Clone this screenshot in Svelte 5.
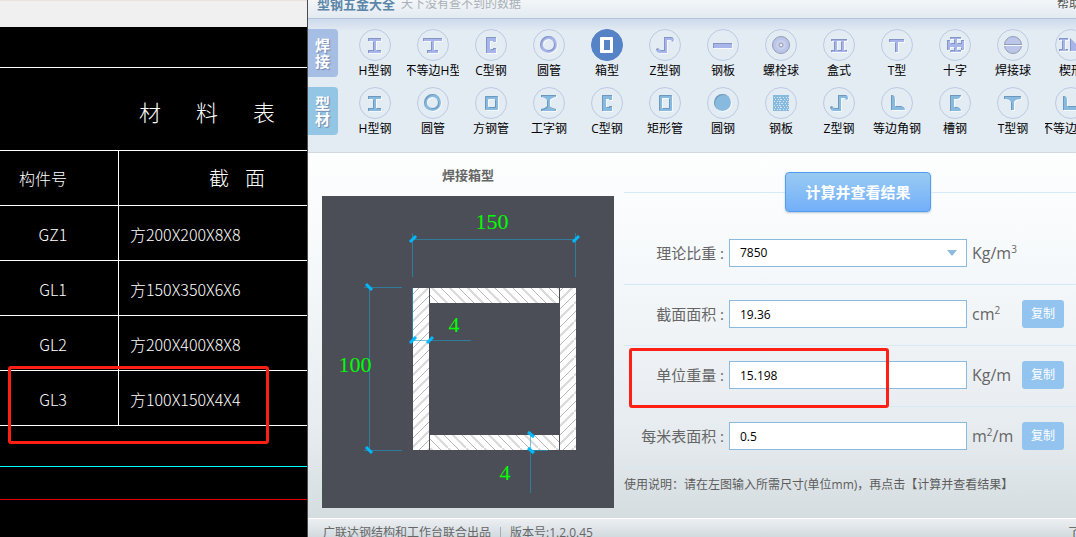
<script lang="ts">
  const members = [
    { id: 'GZ1', section: '方200X200X8X8' },
    { id: 'GL1', section: '方150X350X6X6' },
    { id: 'GL2', section: '方200X400X8X8' },
    { id: 'GL3', section: '方100X150X4X4', marked: true },
  ]

  const beam = 'M9 9H22V12H17V21H22V24H9V21H14V12H9Z'
  const ring = 'M7 15.5A8.500 8.500 0 1 1 24 15.500A8.500 8.500 0 1 1 7 15.500ZM10 15.500A5.500 5.500 0 1 0 21 15.500A5.500 5.500 0 1 0 10 15.500Z'
  const lipped = 'M11 8H21V13H18V12H15V20H18V19H21V24H11Z'
  const box = 'M10 8H21Q22 8 22 9V23Q22 24 21 24H10Q9 24 9 23V9Q9 8 10 8ZM13 11V21H19V11Z'
  const zed = 'M15 8H22Q25 8 25 12L23 13Q23 11 21 11H18V24H11Q8 24 7 20L9 19Q10 21 12 21H15Z'

  const welded = [
    { label: 'H型钢', d: beam },
    { label: '不等边H型', d: 'M6 9H25V12H17V21H21V24H10V21H14V12H6Z' },
    { label: 'C型钢', d: lipped },
    { label: '圆管', d: ring },
    { label: '箱型', d: box },
    { label: 'Z型钢', d: zed },
    { label: '钢板', d: 'M6 14H25V19H6Z' },
    { label: '螺栓球', kind: 'bolt' },
    { label: '盒式', d: 'M8 10H24V12H21V21H24V23H8V21H11V12H8ZM14 12V21H18V12Z' },
    { label: 'T型', d: 'M8 10H23V13H17V23H14V13H8Z' },
    { label: '十字', d: 'M11 8H22V10H18V14H22V11H25V21H22V18H18V21H22V23H11V21H15V18H11V21H8V11H11V14H15V10H11Z' },
    { label: '焊接球', kind: 'ball' },
    { label: '楔形', d: 'M4 9H13V11H10V20H13V22H4V20H7V11H4ZM15 9L28 22H15Z' },
  ]

  const profiles = [
    { label: 'H型钢', d: beam },
    { label: '圆管', d: ring },
    { label: '方钢管', d: 'M11 9H22Q23 9 23 10V22Q23 23 22 23H11Q10 23 10 22V10Q10 9 11 9ZM14 12Q13 12 13 13V19Q13 20 14 20H19Q20 20 20 19V13Q20 12 19 12Z' },
    { label: '工字钢', d: 'M8 8H23V10Q18 11 17 13V19Q18 21 23 22V24H8V22Q13 21 14 19V13Q13 11 8 10Z' },
    { label: 'C型钢', d: lipped },
    { label: '矩形管', d: 'M11 8H22Q23 8 23 9V23Q23 24 22 24H11Q10 24 10 23V9Q10 8 11 8ZM13 11V21H20V11Z' },
    { label: '圆钢', d: 'M7 15.500A8.500 8.500 0 1 1 24 15.500A8.500 8.500 0 1 1 7 15.500Z' },
    { label: '钢板', kind: 'plate' },
    { label: 'Z型钢', d: zed },
    { label: '等边角钢', d: 'M10 8Q14 8 14 12V19H20Q24 20 24 23H10Z' },
    { label: '槽钢', d: 'M11 8H22Q22 11 18 12H15V20H18Q22 21 22 24H11Z' },
    { label: 'T型钢', d: 'M7 9H24V12Q18 12 17 15V23H14V15Q13 12 7 12Z' },
    { label: '不等边角钢', d: 'M8 9Q12 9 12 13V19H24Q28 20 28 23H8Z' },
  ]

  const groups = [
    { name: '焊接', cls: 'welded', items: welded },
    { name: '型材', cls: 'profiles', items: profiles },
  ]

  let current = welded[4]
  let density = '7850'
  let width = 150
  let height = 100
  let t1 = 4
  let t2 = 4
  let area = ''
  let weight = ''
  let surface = ''

  function calculate() {
    const cm2 = (width * height - (width - 2 * t1) * (height - 2 * t2)) / 100
    area = String(cm2)
    weight = ((cm2 * Number(density)) / 10000).toFixed(3)
    surface = String((2 * (width + height)) / 1000)
  }

  function copy(value: string) {
    navigator.clipboard.writeText(value)
  }

  calculate()
</script>

<div class="desktop">
  <section class="cad">
    <div class="cad-bar"></div>
    <table>
      <colgroup>
        <col class="id-col" />
        <col />
      </colgroup>
      <thead>
        <tr class="blank"><td colspan="2"></td></tr>
        <tr class="title">
          <th colspan="2"><div><span>材</span><span>料</span><span>表</span></div></th>
        </tr>
        <tr class="head">
          <th>构件号</th>
          <th><div><span>截</span><span>面</span></div></th>
        </tr>
      </thead>
      <tbody>
        {#each members as m}
          <tr>
            <td class="id">{m.id}</td>
            <td class="section">
              {m.section}
              {#if m.marked}<i class="mark"></i>{/if}
            </td>
          </tr>
        {/each}
      </tbody>
    </table>
    <div class="cyan-line"></div>
    <div class="red-line"></div>
  </section>

  <main class="app">
    <header>
      <strong>型钢五金大全</strong>
      <span>天下没有查不到的数据</span>
      <a href="#help">帮助</a>
    </header>

    <nav>
      {#each groups as group}
        <div class="group {group.cls}">
          <div class="tab">{group.name}</div>
          {#each group.items as item}
            <button class="shape" class:active={current === item} on:click={() => (current = item)}>
              <svg viewBox="0 0 32 32" width="32" height="32" aria-hidden="true">
                <circle class="rim" cx="16" cy="16" r="15.5" />
                {#if item.kind === 'bolt'}
                  <circle class="ball" cx="16" cy="16" r="8.5" />
                  <circle class="shine" cx="16" cy="16" r="5" />
                  <circle class="hole" cx="16" cy="16" r="2" />
                {:else if item.kind === 'ball'}
                  <circle class="ball" cx="16" cy="16" r="8.5" />
                  <path class="seam" d="M8 15.5H24" />
                  <path class="cut" d="M7 16.5H25" />
                {:else if item.kind === 'plate'}
                  <rect class="glyph" x="8" y="8" width="16" height="16" />
                  <path
                    class="specks"
                    d="M9 10.5H24M10 12.5H24M9 14.5H24M11 16.5H24M9 18.5H24M10 20.5H24M9 22.5H24" />
                {:else}
                  <path class="glyph" filter="url(#bevel)" fill-rule="evenodd" d={item.d} />
                {/if}
              </svg>
              <span>{item.label}</span>
            </button>
          {/each}
        </div>
      {/each}
    </nav>

    <div class="work">
      <figure>
        <figcaption>焊接箱型</figcaption>
        <svg class="drawing" viewBox="0 0 292 312">
          <defs>
            <!-- pressed-in look for the toolbar glyphs -->
            <filter id="bevel" x="-20%" y="-30%" width="140%" height="160%" color-interpolation-filters="sRGB">
              <feOffset in="SourceAlpha" dx="1" dy="1" result="moved" />
              <feFlood flood-color="#2f4a6b" flood-opacity="0.3" />
              <feComposite in2="SourceAlpha" operator="in" />
              <feComposite in2="moved" operator="out" result="edge" />
              <feFlood flood-color="#f6f9fc" />
              <feComposite in2="moved" operator="in" result="light" />
              <feMerge>
                <feMergeNode in="light" />
                <feMergeNode in="SourceGraphic" />
                <feMergeNode in="edge" />
              </feMerge>
            </filter>
            <pattern id="rise" width="18" height="18" patternUnits="userSpaceOnUse">
              <rect width="18" height="18" fill="#fff" />
              <path d="M-1 10L10 -1M8 19L19 8" stroke="#b4b4b8" />
              <path d="M-1 19L19 -1" stroke="#d8d8d8" stroke-width="2" />
            </pattern>
            <pattern id="fall" width="18" height="18" patternUnits="userSpaceOnUse">
              <rect width="18" height="18" fill="#fff" />
              <path d="M-1 8L10 19M8 -1L19 10" stroke="#b4b4b8" />
              <path d="M-1 -1L19 19" stroke="#d8d8d8" stroke-width="2" />
            </pattern>
          </defs>
          <rect x="91" y="92" width="16" height="162" fill="url(#rise)" />
          <rect x="238" y="92" width="16" height="162" fill="url(#rise)" />
          <rect x="108" y="92" width="129" height="15" fill="url(#fall)" />
          <rect x="108" y="239" width="129" height="15" fill="url(#fall)" />
          <g class="dim">
            <path d="M90.5 37V81M253.5 37V81M90 43.5H254" />
            <path d="M42 91.5H80M42 254.5H80M47.5 91V254" />
            <path d="M90 144.5H149M90.5 92V144" />
            <path d="M208.5 238V297M208 254.5H226" />
          </g>
          <g class="tick">
            <path d="M88 46L94 40M251 46L257 40" />
            <path d="M88 147L94 141M105 147L111 141" />
            <path d="M44 88L50 94M44 251L50 257" />
            <path d="M206 236L212 241M206 252L212 257" />
          </g>
          <text x="170" y="33">{width}</text>
          <text x="33" y="176">{height}</text>
          <text x="132" y="136">{t1}</text>
          <text x="183" y="284">{t2}</text>
        </svg>
      </figure>

      <form on:submit|preventDefault={calculate}>
        <div class="submit"><button type="submit">计算并查看结果</button></div>
        <div class="row">
          <label for="density">理论比重 :</label>
          <div class="select">
            <select id="density" bind:value={density}>
              <option>7850</option>
              <option>7930</option>
            </select>
            <svg viewBox="0 0 10 6" width="10" height="6"><path d="M0 0H10L5 6Z" /></svg>
          </div>
          <span class="unit">Kg/m<sup>3</sup></span>
        </div>
        <div class="row">
          <label for="area">截面面积 :</label>
          <input id="area" bind:value={area} />
          <span class="unit">cm<sup>2</sup></span>
          <button type="button" on:click={() => copy(area)}>复制</button>
        </div>
        <div class="row">
          <label for="weight">单位重量 :</label>
          <input id="weight" bind:value={weight} />
          <span class="unit">Kg/m</span>
          <button type="button" on:click={() => copy(weight)}>复制</button>
          <i class="mark"></i>
        </div>
        <div class="row">
          <label for="surface">每米表面积 :</label>
          <input id="surface" bind:value={surface} />
          <span class="unit">m<sup>2</sup>/m</span>
          <button type="button" on:click={() => copy(surface)}>复制</button>
        </div>
        <p>使用说明：请在左图输入所需尺寸(单位mm)，再点击【计算并查看结果】</p>
      </form>
    </div>

    <footer>
      <span>广联达钢结构和工作台联合出品</span>
      <span class="version">版本号:1.2.0.45</span>
      <a href="#about">了解</a>
    </footer>
  </main>
</div>

<style>
  :global(body) {
    margin: 0;
  }

  .desktop {
    display: grid;
    grid-template-columns: 308px 1fr;
    height: 100vh;
    overflow: hidden;
    font: 12px/16px 'Open Sans', 'Noto Sans CJK SC', sans-serif;
  }

  button,
  input,
  select {
    box-sizing: border-box;
    margin: 0;
    padding: 0;
    font: inherit;
  }

  /* drawing sheet */
  .cad {
    background: #000;
    border-right: 1px solid #4a4a4a;
    color: #fff;
    font-family: 'Noto Sans CJK SC', sans-serif;
    font-weight: 300;
  }

  .cad-bar {
    box-sizing: border-box;
    height: 27px;
    background: #f0f0f0;
    border-top: 1px solid #ebe2de;
  }

  table {
    width: 100%;
    border-spacing: 0;
    table-layout: fixed;
  }

  .id-col {
    width: 119px;
  }

  th,
  td {
    box-sizing: border-box;
    height: 55px;
    padding: 0;
    border-bottom: 1px solid #fff;
    font-weight: 300;
  }

  .blank td {
    height: 41px;
  }

  .title th {
    height: 83px;
    font-size: 22px;
    line-height: 28px;
  }

  .title div {
    display: flex;
    justify-content: flex-end;
    gap: 35px;
    padding: 4px 32px 0 0;
  }

  .head th {
    font-size: 20px;
    line-height: 28px;
  }

  .head th:first-child {
    padding-right: 32px;
    font-size: 16px;
  }

  .head div {
    display: flex;
    justify-content: flex-end;
    gap: 16px;
    padding-right: 42px;
  }

  .id,
  .head th:first-child {
    border-right: 1px solid #fff;
  }

  tbody td {
    font-size: 16px;
    line-height: 20px;
  }

  .id {
    padding: 2px 12px 0 0;
    text-align: center;
  }

  .section {
    padding: 2px 0 0 11px;
  }

  tbody tr,
  .row {
    position: relative;
  }

  .mark {
    position: absolute;
    box-sizing: border-box;
    border: 3px solid #ff2015;
    border-radius: 3px;
    pointer-events: none;
  }

  tr .mark {
    inset: -5px 38px -18px 8px;
  }

  .cyan-line {
    height: 40px;
    border-bottom: 1px solid #0ff;
  }

  .red-line {
    height: 32px;
    border-bottom: 1px solid #e60000;
  }

  /* calculator window */
  .app {
    display: flex;
    flex-direction: column;
    min-width: 0;
    overflow: hidden;
  }

  header {
    display: flex;
    flex: none;
    align-items: center;
    box-sizing: border-box;
    height: 19px;
    padding: 0 0 10px 9px;
    overflow: hidden;
    background: linear-gradient(#f3f6f9, #e2eaf1);
    border-bottom: 1px solid #b6c5dc;
    white-space: nowrap;
  }

  header strong {
    color: #5b86a8;
    font-size: 13px;
  }

  header span {
    margin-left: 6px;
    color: #a9afb5;
  }

  header a {
    margin: 0 -5px 0 auto;
    color: #555;
    text-decoration: none;
  }

  nav {
    display: flex;
    flex: none;
    flex-direction: column;
    gap: 8px;
    padding: 10px 0 15px;
    overflow: hidden;
    background: linear-gradient(#ccdaed, #e3ebf3 12px);
    border-bottom: 1px solid #d4d9e0;
  }

  .group {
    display: flex;
    align-items: flex-start;
    height: 50px;
  }

  .tab {
    flex: none;
    box-sizing: border-box;
    width: 30px;
    height: 48px;
    margin-right: 8px;
    padding: 8px 7px;
    border-radius: 0 4px 4px 0;
    background: #a6bde4;
    color: #fff;
    font-size: 15px;
    font-weight: 700;
    line-height: 16px;
    text-shadow: 1px 1px 1px #6f86ae;
  }

  .profiles .tab {
    background: #93c6e4;
  }

  .shape {
    display: flex;
    flex: none;
    flex-direction: column;
    align-items: center;
    gap: 2px;
    width: 58px;
    border: 0;
    background: none;
    color: #000;
    cursor: pointer;
  }

  .shape svg {
    display: block;
  }

  .shape span {
    display: flex;
    justify-content: center;
    width: 52px;
    overflow: hidden;
    line-height: 16px;
    white-space: nowrap;
  }

  .rim {
    fill: none;
    stroke: #bccae2;
  }

  .glyph {
    fill: #a8b5ea;
  }

  .profiles .glyph {
    fill: #88b9de;
  }

  .active .rim {
    fill: #5682c6;
    stroke: #5682c6;
  }

  .active .glyph {
    fill: #fff;
    filter: none;
  }

  .ball {
    fill: #bcc6e8;
    stroke: #929db5;
  }

  .shine {
    fill: #c9d0ee;
  }

  .hole {
    fill: #e8edf5;
    stroke: #8f98ab;
  }

  .seam {
    stroke: #8f9cb8;
  }

  .cut {
    stroke: #f4f7fb;
  }

  .specks {
    stroke: #d5e6f3;
    stroke-dasharray: 1 2 1 1 2 2;
  }

  .work {
    display: flex;
    flex: none;
    gap: 10px;
    padding: 0 0 10px 14px;
    background: linear-gradient(#fdfefe, #f6f9fb 30%, #e7ecf0 75%, #d5dde1);
  }

  figure {
    flex: none;
    width: 292px;
    margin: 0;
  }

  figcaption {
    padding: 12px 0 11px;
    color: #666;
    font-size: 13px;
    font-weight: 600;
    line-height: 20px;
    text-align: center;
  }

  .drawing {
    display: block;
    width: 100%;
    background: #4b4e57;
  }

  .drawing text {
    fill: #0f0;
    font: 22px 'Liberation Serif', serif;
    text-anchor: middle;
  }

  .dim {
    fill: none;
    stroke: #1c9cc8;
    stroke-opacity: 0.6;
  }

  .tick {
    stroke: #00b8ff;
    stroke-width: 3;
  }

  form {
    flex: 1;
    margin-right: -16px;
  }

  .submit {
    display: flex;
    align-items: center;
    padding: 19px 0 12px;
  }

  .submit::before,
  .submit::after {
    content: '';
    flex: 1;
    height: 1px;
    background: #d5e9f7;
  }

  .submit button {
    width: 146px;
    height: 40px;
    border: 1px solid #529df0;
    border-radius: 4px;
    background: linear-gradient(#98cbf2, #73affa);
    box-shadow: 0 1px 2px #b9c6d2;
    color: #fff;
    font-size: 15px;
    font-weight: 600;
  }

  .row {
    display: grid;
    grid-template-columns: 100px 1fr 45px 42px;
    gap: 5px;
    align-items: center;
    padding: 15px 28px 17px 0;
    border-bottom: 1px solid #d5e9f7;
  }

  .row label {
    color: #666;
    font-size: 15px;
    line-height: 28px;
    text-align: right;
  }

  .row input,
  .row select {
    width: 100%;
    min-width: 0;
    height: 28px;
    padding: 0 10px;
    border: 1px solid #8abadf;
    border-radius: 0;
    background: #fff;
    color: #000;
  }

  .select {
    position: relative;
  }

  .select select {
    display: block;
    appearance: none;
  }

  .select svg {
    position: absolute;
    top: 11px;
    right: 10px;
    fill: #8abadf;
    pointer-events: none;
  }

  .unit {
    color: #666;
    font-size: 16px;
    line-height: 28px;
    white-space: nowrap;
  }

  sup {
    font-size: 10px;
    line-height: 0;
  }

  .row button {
    height: 28px;
    border: 0;
    border-radius: 3px;
    background: #92c4ef;
    color: #fff;
  }

  .row .mark {
    inset: 2px 203px -2px 5px;
  }

  p {
    margin: 8px 0 0;
    color: #5c5c5c;
    line-height: 18px;
    white-space: nowrap;
  }

  footer {
    display: flex;
    flex: none;
    align-items: center;
    box-sizing: border-box;
    height: 28px;
    padding-left: 15px;
    border-top: 1px solid #fff;
    background: linear-gradient(#eceff2, #c5d0d6);
    color: #666;
    white-space: nowrap;
  }

  .version {
    margin-left: 9px;
    padding-left: 9px;
    border-left: 1px solid #a5adb5;
    line-height: 12px;
  }

  footer a {
    margin: 0 -16px 0 auto;
    color: #555;
    text-decoration: none;
  }
</style>
